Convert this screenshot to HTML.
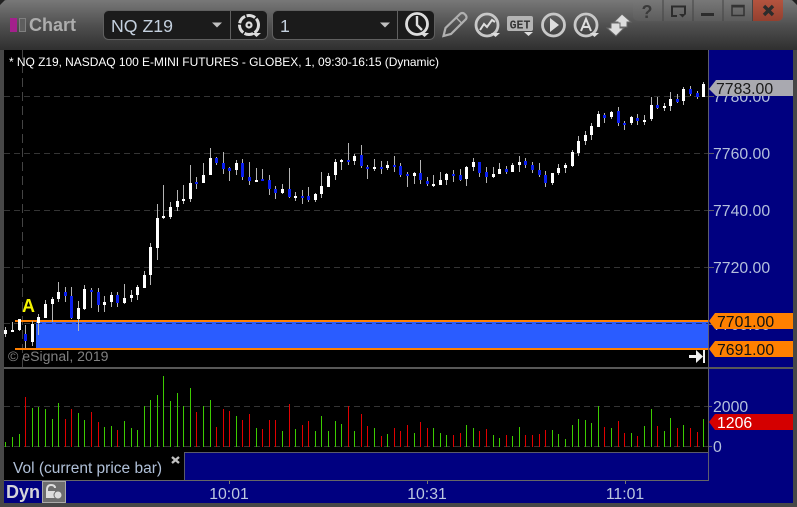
<!DOCTYPE html>
<html><head><meta charset="utf-8"><style>
html,body{margin:0;padding:0;background:#3a3a3a}
svg{display:block;position:absolute;left:0;top:0}
text{font-family:"Liberation Sans",sans-serif}
</style></head><body>
<svg xmlns="http://www.w3.org/2000/svg" width="797" height="507" viewBox="0 0 797 507">
<defs>
<linearGradient id="tb" x1="0" y1="0" x2="0" y2="1"><stop offset="0" stop-color="#787878"/><stop offset=".5" stop-color="#505050"/><stop offset="1" stop-color="#2f2f2f"/></linearGradient>
<linearGradient id="wb" x1="0" y1="0" x2="0" y2="1"><stop offset="0" stop-color="#787878"/><stop offset="1" stop-color="#5c5c5c"/></linearGradient>
<linearGradient id="cb" x1="0" y1="0" x2="0" y2="1"><stop offset="0" stop-color="#b4543f"/><stop offset="1" stop-color="#94402f"/></linearGradient>
</defs>
<rect width="797" height="507" fill="#474747"/>
<path d="M0 6Q0 0 8 0H789Q797 0 797 6V50H0z" fill="url(#tb)"/>
<path d="M0 0h5L0 5zM797 0h-5l5 5z" fill="#222"/>
<rect x="4" y="50" width="704" height="317" fill="#000"/>
<rect x="709" y="50" width="84" height="453" fill="#000080"/>
<rect x="4" y="367" width="705" height="2" fill="#585858"/>
<rect x="709" y="367" width="84" height="2" fill="#585858"/>
<rect x="4" y="369" width="704" height="84" fill="#000"/>
<rect x="4" y="453" width="704" height="28" fill="#000"/>
<rect x="184.500" y="452.500" width="524" height="28" fill="#000080" stroke="#5a5a6a"/>
<rect x="4" y="481" width="705" height="22" fill="#000080"/>
<rect x="4" y="480" width="705" height="1" fill="#666"/>
<rect x="708" y="50" width="1" height="431" fill="#5d5d6e"/>

<!-- Window buttons -->
<path d="M633 0H783V15Q783 21 777 21H639Q633 21 633 15z" fill="url(#wb)"/>
<path d="M753 0H783V15Q783 21 777 21H753z" fill="url(#cb)"/>
<path d="M663 0v21M693 0v21M723 0v21M752.500 0v21" stroke="#444" fill="none"/>
<text x="647" y="18" font-size="18" font-weight="bold" fill="#3a3a3a" text-anchor="middle">?</text>
<path d="M685 14.500V6.500H672V16H677" fill="none" stroke="#2c2c2c" stroke-width="2"/>
<path d="M679 14h7l-3.500 3.500z" fill="#2c2c2c"/>
<rect x="701" y="13" width="13" height="3" fill="#2c2c2c"/>
<rect x="732" y="5.500" width="12" height="10" fill="none" stroke="#333" stroke-width="1.500"/><rect x="732" y="5" width="12" height="2.500" fill="#333"/>
<path d="M764 6l9 9M773 6l-9 9" stroke="#2c2c2c" stroke-width="3.400" fill="none"/>

<!-- Title -->
<rect x="10" y="18" width="7" height="14" fill="#a3208c"/>
<rect x="19.500" y="18.500" width="6" height="13" fill="#5e5e5e" stroke="#808080"/>
<text x="29" y="31" font-size="18" font-weight="bold" fill="#adadad">Chart</text>

<!-- Symbol box -->
<rect x="103.500" y="10.500" width="164" height="29" rx="5" fill="#1b1b1b" stroke="#606060"/>
<path d="M230.500 11v28" stroke="#606060"/>
<text x="111" y="32" font-size="17.700" fill="#c4d0de">NQ Z19</text>
<path d="M212 22.500h10l-5 5z" fill="#c0c0c0"/>
<g fill="none" stroke="#ddd"><circle cx="249" cy="25" r="9.500" stroke-width="3" stroke-dasharray="9 1.500"/><circle cx="249" cy="25" r="2.500" stroke-width="2.200"/></g>
<path d="M252 33h9l-4.500 4z" fill="#ddd"/>

<!-- Interval box -->
<rect x="272.500" y="10.500" width="162" height="29" rx="5" fill="#1b1b1b" stroke="#606060"/>
<path d="M397.500 11v28" stroke="#606060"/>
<text x="280" y="32" font-size="17.700" fill="#c4d0de">1</text>
<path d="M380 22.500h10l-5 5z" fill="#c0c0c0"/>
<circle cx="417" cy="24" r="10.500" fill="none" stroke="#ddd" stroke-width="2.800"/>
<path d="M417 16v9l5 5" fill="none" stroke="#ddd" stroke-width="2.400"/>
<path d="M420 33h9l-4.500 4z" fill="#ddd"/>

<!-- Tool icons -->
<path d="M443.500 36l2-8 15-14.500q2-1 3.500 0l2 2q1 2 0 3.500L451 34z" fill="none" stroke="#b0b0b0" stroke-width="2.200"/>
<path d="M456.500 18l6 6" stroke="#b0b0b0" stroke-width="1.500"/>
<circle cx="487" cy="25" r="11" fill="none" stroke="#c8c8c8" stroke-width="2.800"/>
<path d="M480 30l4-6 3 3 5-7 3 2" fill="none" stroke="#ddd" stroke-width="2"/>
<path d="M491 33h9l-4.500 4z" fill="#ddd"/>
<rect x="507" y="16" width="26" height="15" rx="2" fill="#b4b4b4"/>
<text x="520" y="28.500" font-size="11.500" font-weight="bold" fill="#333" text-anchor="middle" style="font-family:'Liberation Mono',monospace">GET</text>
<path d="M524 32h9l-4.500 4z" fill="#ddd"/>
<circle cx="553.500" cy="25" r="11" fill="none" stroke="#c8c8c8" stroke-width="2.800"/>
<path d="M550 18l9 7-9 7z" fill="#ddd"/>
<circle cx="586" cy="25" r="11" fill="none" stroke="#c8c8c8" stroke-width="2.800"/>
<path d="M581 31l5-12 5 12M583 27h6" fill="none" stroke="#ddd" stroke-width="2"/>
<path d="M590 33h9l-4.500 4z" fill="#ddd"/>
<path d="M622 14l9 8-4 0v5h-9v-5h-4z" fill="#ddd" stroke="#666"/>
<path d="M616 36l-9-8 4 0v-5h9v5h4z" fill="#ddd" stroke="#666"/>

<!-- Grid -->
<g stroke="#343434" stroke-dasharray="6 4" fill="none">
<path d="M4 96.500H708M4 153.500H708M4 210.500H708M4 267.500H708"/>
<path d="M4 406.500H708M4 446.500H708"/>
<path d="M22.500 50V367" stroke-dasharray="9 5" stroke="#444"/>
<path d="M4 323.500H36"/>
</g>

<!-- Header -->
<text x="9" y="66" font-size="12" fill="#fff" textLength="430" lengthAdjust="spacing">* NQ Z19, NASDAQ 100 E-MINI FUTURES - GLOBEX, 1, 09:30-16:15 (Dynamic)</text>

<!-- Zone -->
<rect x="36" y="322" width="672" height="26" fill="#2a5cff"/>
<path d="M36 323.500H708" stroke="#143080" stroke-dasharray="6 4"/>
<rect x="15" y="320" width="693" height="2" fill="#ff8000"/>
<rect x="15" y="348" width="693" height="2" fill="#ff8000"/>

<!-- Wicks -->
<path fill="none" stroke="#b4b4b4" d="M5.500 327V337M12.500 322V332M19.500 319V331M25.500 325V348M32.500 321V346M38.500 314V335M45.500 300V318M52.500 297V322M58.500 282V302M65.500 287V302M71.500 287V319M78.500 301V331M84.500 285V310M91.500 288V308M98.500 288V312M104.500 296V312M111.500 292V307M117.500 292V307M124.500 284V304M131.500 290V302M137.500 285V300M144.500 271V288M150.500 243V285M157.500 204V260M163.500 185V219M170.500 202V219M177.500 190V211M183.500 185V204M190.500 165V202M196.500 177V189M203.500 163V183M210.500 148V175M216.500 157V165M223.500 152V174M229.500 167V181M236.500 160V175M242.500 159V180M249.500 162V185M256.500 168V182M262.500 169V181M269.500 175V195M275.500 186V199M282.500 184V194M289.500 168V198M295.500 192V201M302.500 190V204M308.500 187V202M315.500 193V202M321.500 172V198M328.500 173V187M335.500 159V180M341.500 159V170M348.500 143V165M354.500 154V165M361.500 145V168M367.500 165V179M374.500 159V171M381.500 161V174M387.500 161V170M394.500 156V172M400.500 163V177M407.500 172V187M414.500 172V184M420.500 160V184M427.500 177V186M433.500 175V187M440.500 172V185M446.500 173V185M453.500 170V182M460.500 169V181M466.500 166V186M473.500 158V171M479.500 162V177M486.500 167V183M493.500 167V178M499.500 163V174M506.500 166V174M512.500 163V172M519.500 156V172M525.500 158V168M532.500 162V173M539.500 163V177M545.500 171V187M552.500 173V185M558.500 164V175M565.500 163V173M572.500 150V167M578.500 136V156M585.500 131V145M591.500 123V140M598.500 111V127M604.500 113V123M611.500 111V119M618.500 107V126M624.500 121V130M631.500 116V125M637.500 114V125M644.500 115V125M651.500 97V121M657.500 97V109M664.500 103V111M670.500 92V111M677.500 94V103M683.500 87V105M690.500 86V96M697.500 91V99M703.500 82V97"/>
<!-- White bodies -->
<path fill="#fff" d="M4 330h3v4h-3zM11 330h3v2h-3zM18 319h3v11h-3zM31 324h3v18h-3zM37 317h3v6h-3zM44 304h3v14h-3zM51 299h3v5h-3zM57 292h3v7h-3zM77 308h3v11h-3zM83 289h3v20h-3zM103 302h3v3h-3zM110 295h3v7h-3zM123 298h3v5h-3zM130 295h3v3h-3zM136 287h3v8h-3zM143 275h3v13h-3zM149 247h3v28h-3zM156 218h3v30h-3zM162 216h3v2h-3zM169 207h3v10h-3zM176 201h3v6h-3zM182 199h3v2h-3zM189 183h3v16h-3zM202 175h3v8h-3zM209 158h3v17h-3zM235 163h3v7h-3zM255 180h3v2h-3zM281 189h3v4h-3zM294 196h3v2h-3zM314 194h3v6h-3zM320 186h3v8h-3zM327 176h3v11h-3zM334 162h3v13h-3zM340 160h3v2h-3zM353 156h3v5h-3zM373 167h3v2h-3zM386 165h3v3h-3zM413 173h3v3h-3zM432 184h3v2h-3zM439 180h3v5h-3zM445 174h3v6h-3zM465 167h3v12h-3zM472 162h3v5h-3zM492 174h3v3h-3zM498 169h3v5h-3zM511 165h3v7h-3zM518 162h3v3h-3zM551 173h3v10h-3zM557 168h3v5h-3zM564 165h3v3h-3zM571 152h3v14h-3zM577 141h3v12h-3zM584 135h3v6h-3zM590 126h3v9h-3zM597 114h3v13h-3zM610 112h3v5h-3zM630 117h3v6h-3zM643 120h3v2h-3zM650 105h3v14h-3zM663 106h3v2h-3zM669 99h3v7h-3zM682 89h3v12h-3zM702 84h3v13h-3z"/>
<!-- Blue bodies -->
<path fill="#0a1eee" d="M24 334h3v7h-3zM64 292h3v4h-3zM70 296h3v22h-3zM90 290h3v2h-3zM97 292h3v13h-3zM116 295h3v8h-3zM195 182h3v2h-3zM215 158h3v5h-3zM222 163h3v6h-3zM228 168h3v3h-3zM241 163h3v14h-3zM248 177h3v4h-3zM261 179h3v2h-3zM268 180h3v9h-3zM274 189h3v4h-3zM288 189h3v8h-3zM301 196h3v2h-3zM307 196h3v4h-3zM347 160h3v2h-3zM360 155h3v11h-3zM366 167h3v2h-3zM380 167h3v2h-3zM393 165h3v2h-3zM399 166h3v9h-3zM406 174h3v2h-3zM419 173h3v7h-3zM426 181h3v3h-3zM452 174h3v2h-3zM459 175h3v5h-3zM478 162h3v11h-3zM485 172h3v5h-3zM505 169h3v3h-3zM524 161h3v4h-3zM531 165h3v5h-3zM538 170h3v5h-3zM544 175h3v8h-3zM603 115h3v3h-3zM617 111h3v12h-3zM623 123h3v2h-3zM636 118h3v3h-3zM656 105h3v3h-3zM676 99h3v3h-3zM689 89h3v5h-3zM696 93h3v4h-3z"/>

<text x="28.500" y="312" font-size="18" font-weight="bold" fill="#f4f400" text-anchor="middle">A</text>
<text x="8" y="361" font-size="14.100" fill="#808080">© eSignal, 2019</text>
<path d="M689 355h7v-5l7 6.500-7 6.500v-5h-7z" fill="#f0f0f0"/><rect x="703" y="350" width="2" height="13" fill="#f0f0f0"/>

<!-- Volume -->
<path fill="none" stroke="#3ccc00" d="M5.500 442V447M12.500 437V447M19.500 434V447M32.500 408V447M38.500 407V447M45.500 409V447M52.500 419V447M58.500 403V447M78.500 413V447M84.500 420V447M104.500 427V447M111.500 426V447M124.500 421V447M131.500 428V447M137.500 430V447M144.500 406V447M150.500 400V447M157.500 395V447M163.500 376V447M170.500 401V447M177.500 393V447M183.500 406V447M190.500 388V447M203.500 406V447M210.500 400V447M236.500 416V447M256.500 428V447M282.500 431V447M295.500 429V447M315.500 431V447M321.500 416V447M328.500 431V447M335.500 421V447M341.500 424V447M354.500 431V447M374.500 428V447M387.500 434V447M414.500 433V447M433.500 428V447M440.500 433V447M446.500 435V447M466.500 425V447M473.500 428V447M493.500 435V447M499.500 438V447M512.500 436V447M519.500 427V447M552.500 430V447M558.500 434V447M565.500 439V447M572.500 425V447M578.500 419V447M585.500 420V447M591.500 423V447M598.500 406V447M611.500 428V447M631.500 433V447M644.500 426V447M651.500 409V447M664.500 431V447M670.500 418V447M683.500 425V447M703.500 419V447"/>
<path fill="none" stroke="#e00000" d="M25.500 397V447M65.500 419V447M71.500 409V447M91.500 412V447M98.500 422V447M117.500 430V447M196.500 412V447M216.500 427V447M223.500 409V447M229.500 411V447M242.500 420V447M249.500 414V447M262.500 429V447M269.500 420V447M275.500 420V447M289.500 404V447M302.500 425V447M308.500 421V447M348.500 406V447M361.500 414V447M367.500 426V447M381.500 436V447M394.500 428V447M400.500 431V447M407.500 425V447M420.500 422V447M427.500 428V447M453.500 435V447M460.500 433V447M479.500 431V447M486.500 429V447M506.500 435V447M525.500 435V447M532.500 435V447M539.500 434V447M545.500 430V447M604.500 427V447M618.500 421V447M624.500 433V447M637.500 436V447M657.500 426V447M677.500 428V447M690.500 428V447M697.500 432V447"/>

<!-- Vol label -->
<text x="13" y="473" font-size="15.500" fill="#b0c0d8">Vol (current price bar)</text>
<path d="M172 457l7 6M179 457l-7 6" stroke="#c0c0c0" stroke-width="2.400"/>

<!-- Time axis -->
<text x="6" y="498" font-size="18" font-weight="bold" fill="#d4d4d8">Dyn</text>
<rect x="42.500" y="481.500" width="23" height="21" fill="#6e6e6e" stroke="#aaa"/>
<path d="M47 498v-8q0-5 4-5t4 3" fill="none" stroke="#ddd" stroke-width="2"/>
<rect x="46" y="491" width="9" height="7" fill="#ddd"/>
<circle cx="58" cy="495" r="4" fill="#ddd" stroke="#6e6e6e"/>
<path d="M229.500 481v3M427.500 481v3M625.500 481v3" stroke="#777"/>
<g font-size="15.800" fill="#bcc8de" text-anchor="middle">
<text x="229" y="499">10:01</text><text x="427" y="499">10:31</text><text x="625" y="499">11:01</text>
</g>

<!-- Axis labels -->
<path d="M709 96.500h5M709 153.500h5M709 210.500h5M709 267.500h5M709 324.500h5M709 406.500h3M709 446.500h3" stroke="#5d5d6e"/>
<g font-size="15.800" fill="#b4c0dc">
<text x="713" y="102">7780.00</text>
<text x="713" y="159">7760.00</text>
<text x="713" y="216">7740.00</text>
<text x="713" y="273">7720.00</text>
<text x="713" y="330">7700.00</text>
<text x="713" y="412">2000</text>
<text x="713" y="452">0</text>
</g>
<path d="M709 89l7-9h77v16h-77z" fill="#a9a9b0"/>
<text x="716" y="94" font-size="15.800" fill="#1a1a1a">7783.00</text>
<path d="M709 321l6-8h78v16h-78z" fill="#ff8000"/>
<text x="717" y="327" font-size="15.800" fill="#111">7701.00</text>
<path d="M709 349l6-8h78v16h-78z" fill="#ff8000"/>
<text x="717" y="355" font-size="15.800" fill="#111">7691.00</text>
<path d="M709 422l6-8h78v16h-78z" fill="#d40000"/>
<text x="717" y="428" font-size="15.800" fill="#fff">1206</text>
</svg>
</body></html>
